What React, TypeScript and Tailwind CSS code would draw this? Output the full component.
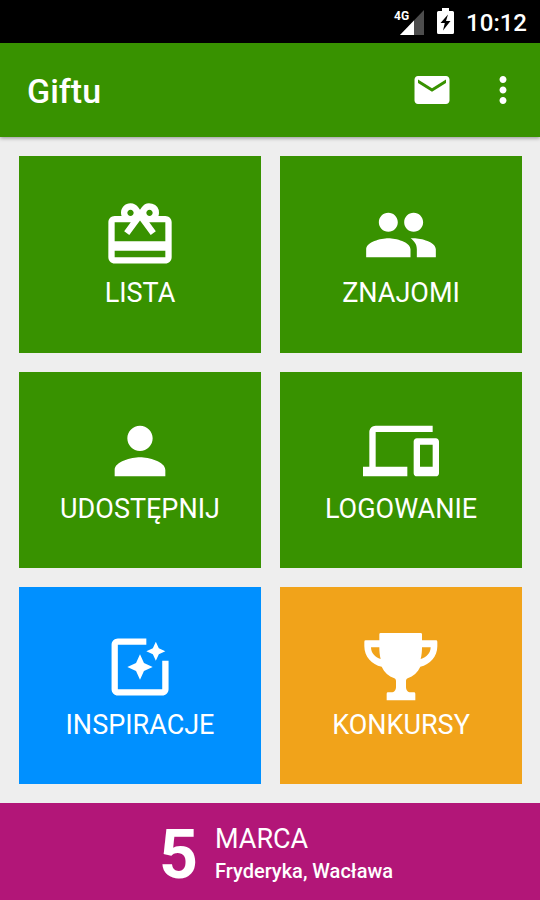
import type { ReactNode } from "react";
import {
  MdEmail,
  MdMoreVert,
  MdPeople,
  MdPerson,
  MdPhonelink,
  MdPhotoFilter,
  MdRedeem,
} from "react-icons/md";

function SignalIcon() {
  return (
    <svg width="32" height="30" viewBox="0 0 32 30" role="img" aria-label="4G">
      <path d="M31 3V28H7z" fill="#4d4d4d" />
      <path d="M21 13.500V28H7z" fill="#fff" />
      <text
        x="1"
        y="13"
        fill="#fff"
        className="font-['Roboto',sans-serif] text-[12px] font-bold"
      >
        4G
      </text>
    </svg>
  );
}

function BatteryIcon() {
  return (
    <svg width="17" height="27" viewBox="0 0 17 27" aria-hidden="true">
      <path
        d="M5 0h7v3h3.500q1.500 0 1.500 1.500v20q0 1.500-1.500 1.500h-14Q0 26 0 24.500v-20Q0 3 1.500 3H5z"
        fill="#fff"
      />
      <path d="M11 6.500 3.500 15h4.300L6 22.500 13.500 13H9z" fill="#000" />
    </svg>
  );
}

function TrophyIcon() {
  return (
    <svg width="76" height="76" viewBox="-4 -12 228 228" fill="currentColor" aria-hidden="true">
      <path
        fillRule="evenodd"
        d="M45 4q0-4 4-4h120q4 0 4 4v18h42q4 0 4 4v14c0 30-22 56-51 61-8 17-21 29-38 35-4 2-5 5-5 9v17c0 9 5 16 14 16h10q4 0 4 4v20H67v-20q0-4 4-4h10c9 0 14-7 14-16v-17c0-4-1-7-5-9-17-6-30-18-38-35C22 96 0 70 0 40V26q0-4 4-4h41zM20 43c0 16 12 31 29 35-3-11-4-22-4-35zM199 43h-26c0 13-1 24-4 35 18-4 30-19 30-35z"
      />
    </svg>
  );
}

type TileProps = { label: string; color: string; children: ReactNode };

function Tile({ label, color, children }: TileProps) {
  return (
    <button
      type="button"
      className={`flex min-w-0 flex-col items-center justify-center pt-0.5 text-white ${color}`}
    >
      {children}
      <span className="text-[27px] leading-10">{label}</span>
    </button>
  );
}

export default function App() {
  return (
    <div className="flex min-h-screen flex-col bg-[#eeeeee] font-['Roboto',sans-serif] text-white">
      <div className="flex h-[43px] items-center justify-end bg-black pr-[13px]">
        <SignalIcon />
        <span className="ml-3">
          <BatteryIcon />
        </span>
        <span className="ml-3 pt-0.5 text-2xl font-medium">10:12</span>
      </div>

      <header className="flex h-[94px] items-center bg-[#389200] pr-4 pl-[27px] shadow-[0_1px_4px_rgba(0,0,0,0.4)]">
        <h1 className="flex-1 pt-0.5 text-[34px] font-medium">Giftu</h1>
        <button type="button" aria-label="Wiadomości">
          <MdEmail size={42} />
        </button>
        <button type="button" aria-label="Więcej" className="ml-[29px]">
          <MdMoreVert size={42} />
        </button>
      </header>

      <main className="grid flex-1 grid-cols-2 grid-rows-3 gap-[19px] py-[19px] pr-[18px] pl-[19px]">
        <Tile label="LISTA" color="bg-[#389200]">
          <MdRedeem size={76} />
        </Tile>
        <Tile label="ZNAJOMI" color="bg-[#389200]">
          <MdPeople size={76} />
        </Tile>
        <Tile label="UDOSTĘPNIJ" color="bg-[#389200]">
          <MdPerson size={76} />
        </Tile>
        <Tile label="LOGOWANIE" color="bg-[#389200]">
          <MdPhonelink size={76} />
        </Tile>
        <Tile label="INSPIRACJE" color="bg-[#0090ff]">
          <MdPhotoFilter size={76} />
        </Tile>
        <Tile label="KONKURSY" color="bg-[#f1a31a]">
          <TrophyIcon />
        </Tile>
      </main>

      <footer className="flex h-[97px] items-center justify-center gap-[17px] bg-[#b21678] pl-3">
        <span className="pt-1.5 text-[68px] leading-none font-bold">5</span>
        <div className="pt-0.5">
          <p className="text-[27px] leading-9">MARCA</p>
          <p className="text-xl font-medium">Fryderyka, Wacława</p>
        </div>
      </footer>
    </div>
  );
}
